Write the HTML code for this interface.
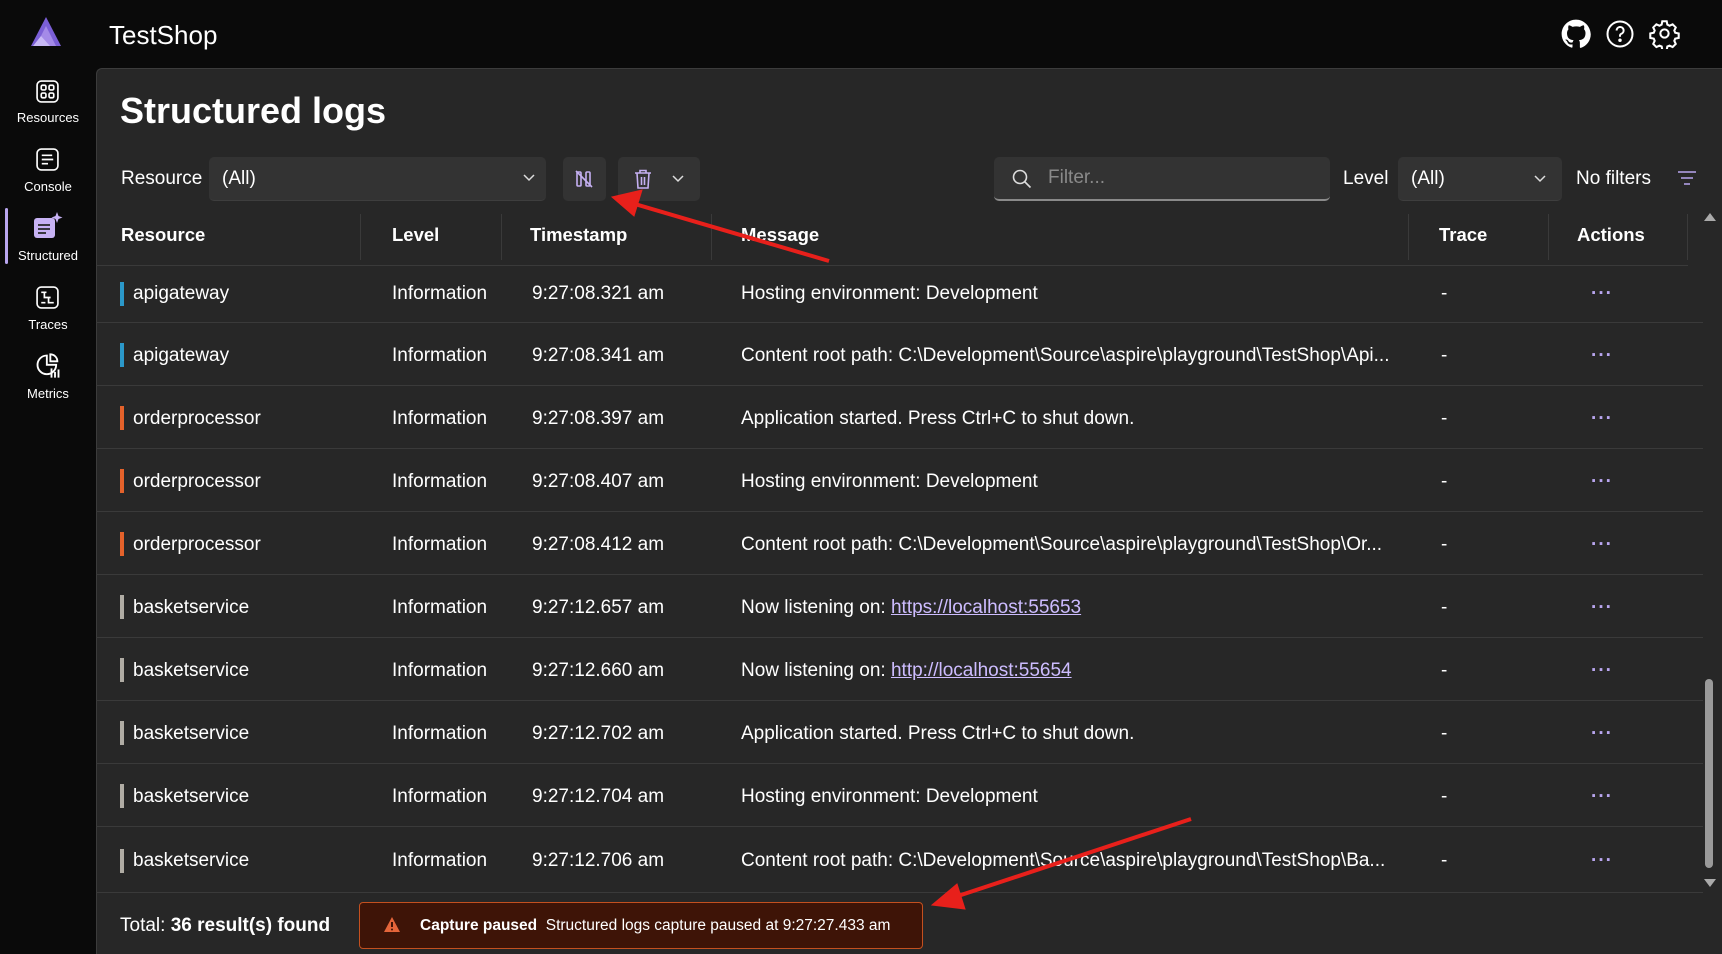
<!DOCTYPE html>
<html><head><meta charset="utf-8"><style>
*{box-sizing:border-box;margin:0;padding:0}
body{width:1722px;height:954px;background:#0a0a0a;font-family:"Liberation Sans",sans-serif;color:#fff;position:relative;overflow:hidden}
.abs{position:absolute}
.panel{position:absolute;left:96px;top:68px;width:1626px;height:886px;background:#272727;border-top:1px solid #3c3c3c;border-left:1px solid #3c3c3c;border-top-left-radius:6px}
.nav{position:absolute;left:0;width:96px;text-align:center;font-size:13px;color:#fff}
.sel{position:absolute;background:#333;border-radius:5px;border-bottom:1px solid #3e3e3e;font-size:19px;display:flex;align-items:center;padding-left:13px}
.th{position:absolute;top:214px;height:52px;line-height:42px;font-size:18.5px;font-weight:bold}
.sep{position:absolute;top:214px;width:1px;height:46px;background:#3a3a3a}
.row{position:absolute;left:96px;width:1607px;height:63px;border-bottom:1px solid #3a3a3a;font-size:19px}
.row div{position:absolute;top:0;line-height:65px;white-space:nowrap}
.bar{position:absolute;left:24px;top:20px;width:4px;height:24px}
.dots{color:#b9a6ef;font-weight:bold;letter-spacing:1px}
a{color:#cdbcff;text-decoration:underline}
</style></head><body>
<svg class="abs" style="left:28px;top:16px" width="36" height="32" viewBox="0 0 36 32"><polygon points="18,1 3,30 33,30" fill="#7b5fd6"/><polygon points="18,10 8,30 28,30" fill="#a48ae8"/><polygon points="13,20 5,30 22,30" fill="#c8b8f5"/></svg>
<div class="abs" style="left:109px;top:20px;font-size:26px">TestShop</div>
<svg class="abs" style="left:1561px;top:19px" width="30" height="30" viewBox="0 0 24 24"><path fill="#fff" d="M12 .5C5.7.5.5 5.7.5 12c0 5.1 3.3 9.4 7.9 10.9.6.1.8-.3.8-.6v-2c-3.2.7-3.9-1.5-3.9-1.5-.5-1.3-1.3-1.7-1.3-1.7-1-.7.1-.7.1-.7 1.2.1 1.8 1.2 1.8 1.2 1 1.8 2.8 1.3 3.5 1 .1-.8.4-1.3.7-1.6-2.6-.3-5.3-1.3-5.3-5.7 0-1.3.5-2.3 1.2-3.1-.1-.3-.5-1.5.1-3.1 0 0 1-.3 3.2 1.2a11 11 0 0 1 5.8 0c2.2-1.5 3.2-1.2 3.2-1.2.6 1.6.2 2.8.1 3.1.8.8 1.2 1.8 1.2 3.1 0 4.4-2.7 5.4-5.3 5.7.4.4.8 1.1.8 2.2v3.3c0 .3.2.7.8.6 4.6-1.5 7.9-5.8 7.9-10.9C23.5 5.7 18.3.5 12 .5z"/></svg>
<svg class="abs" style="left:1605px;top:19px" width="30" height="30" viewBox="0 0 24 24" fill="none" stroke="#fff" stroke-width="1.6"><circle cx="12" cy="12" r="10"/><path d="M9.3 9.2a2.8 2.8 0 1 1 3.8 2.6c-.7.3-1.1.9-1.1 1.6v.8"/><circle cx="12" cy="17" r=".6" fill="#fff"/></svg>
<svg class="abs" style="left:1649px;top:18px" width="31" height="31" viewBox="0 0 24 24" fill="none" stroke="#fff" stroke-width="1.6"><circle cx="12" cy="12" r="3.2"/><path d="M10.3 2.5h3.4l.5 2.6 1.7.9 2.4-1.1 2.4 2.4-1.1 2.4.7 1.7 2.7.6v3.4l-2.7.6-.7 1.7 1.1 2.4-2.4 2.4-2.4-1.1-1.7.7-.5 2.7h-3.4l-.5-2.7-1.7-.7-2.4 1.1-2.4-2.4 1.1-2.4-.7-1.7-2.7-.6v-3.4l2.7-.6.7-1.7-1.1-2.4 2.4-2.4 2.4 1.1 1.7-.9z"/></svg>
<svg class="abs" style="left:35px;top:79px" width="25" height="25" viewBox="0 0 24 24" fill="none" stroke="#fff" stroke-width="1.6"><rect x="2" y="2" width="20" height="20" rx="4"/><rect x="6" y="6" width="4.5" height="4.5" rx="1.3"/><rect x="13.5" y="6" width="4.5" height="4.5" rx="1.3"/><rect x="6" y="13.5" width="4.5" height="4.5" rx="1.3"/><rect x="13.5" y="13.5" width="4.5" height="4.5" rx="1.3"/></svg>
<div class="nav" style="top:110px">Resources</div>
<svg class="abs" style="left:35px;top:147px" width="25" height="25" viewBox="0 0 24 24" fill="none" stroke="#fff" stroke-width="1.6"><rect x="2" y="2" width="20" height="20" rx="4"/><path d="M6.5 8h10M6.5 12h11M6.5 16h6"/></svg>
<div class="nav" style="top:179px">Console</div>
<div class="abs" style="left:5px;top:208px;width:3px;height:56px;background:#b9a6ef;border-radius:2px"></div>
<svg class="abs" style="left:33px;top:212px" width="30" height="28" viewBox="0 0 30 28"><rect x="1" y="6" width="21" height="20" rx="3" fill="#c7b2f4"/><path d="M5 13h12M5 17h12M5 21h8" stroke="#272727" stroke-width="1.8"/><path d="M24 0l1.5 4 4 1.5-4 1.5L24 11l-1.5-4-4-1.5 4-1.5z" fill="#c7b2f4"/></svg>
<div class="nav" style="top:248px">Structured</div>
<svg class="abs" style="left:35px;top:285px" width="25" height="25" viewBox="0 0 24 24" fill="none" stroke="#fff" stroke-width="1.6"><rect x="2" y="2" width="20" height="20" rx="4"/><path d="M6 7h5M9 7v5h6M13 12v5h5M6 17h4"/></svg>
<div class="nav" style="top:317px">Traces</div>
<svg class="abs" style="left:34px;top:352px" width="28" height="28" viewBox="0 0 24 24" fill="none" stroke="#fff" stroke-width="1.6"><path d="M11 3a8 8 0 1 0 8 8h-8z"/><path d="M14 2v6h6a6 6 0 0 0-6-6z"/><path d="M15 14v8M18 17v5M21 15v7"/></svg>
<div class="nav" style="top:386px">Metrics</div>

<div class="panel"></div>
<div class="abs" style="left:120px;top:90px;font-size:36px;font-weight:bold">Structured logs</div>
<div class="abs" style="left:121px;top:168px;font-size:19px">Resource</div>
<div class="sel" style="left:209px;top:157px;width:337px;height:44px">(All)</div>
<svg class="abs" style="left:522px;top:173px" width="14" height="10" viewBox="0 0 14 10"><path d="M2 2l5 5 5-5" stroke="#ddd" stroke-width="1.5" fill="none"/></svg>
<div class="abs" style="left:563px;top:157px;width:43px;height:44px;background:#333;border-radius:5px"></div>
<svg class="abs" style="left:574px;top:169px" width="20" height="20" viewBox="0 0 20 20" fill="none" stroke="#c5b0f2" stroke-width="1.6"><rect x="3" y="3" width="4" height="14" rx="1"/><rect x="12" y="3" width="4" height="14" rx="1"/><path d="M2 2l16 16"/></svg>
<div class="abs" style="left:618px;top:157px;width:82px;height:44px;background:#333;border-radius:5px"></div>
<svg class="abs" style="left:633px;top:168px" width="20" height="22" viewBox="0 0 20 22" fill="none" stroke="#c5b0f2" stroke-width="1.6"><path d="M2 5h16M7 5V2.5h6V5M4 5l1 15h10l1-15M8.5 9v8M11.5 9v8"/></svg>
<svg class="abs" style="left:671px;top:174px" width="14" height="10" viewBox="0 0 14 10"><path d="M2 2l5 5 5-5" stroke="#ddd" stroke-width="1.5" fill="none"/></svg>
<div class="sel" style="left:994px;top:157px;width:336px;height:44px;border-bottom:2px solid #8a8a8a;padding-left:54px;color:#8a8a8a">Filter...</div>
<svg class="abs" style="left:1011px;top:168px" width="22" height="22" viewBox="0 0 22 22" fill="none" stroke="#ddd" stroke-width="1.6"><circle cx="9" cy="9" r="6.5"/><path d="M13.5 13.5l6 6"/></svg>
<div class="abs" style="left:1343px;top:168px;font-size:19px">Level</div>
<div class="sel" style="left:1398px;top:157px;width:164px;height:44px">(All)</div>
<svg class="abs" style="left:1533px;top:174px" width="14" height="10" viewBox="0 0 14 10"><path d="M2 2l5 5 5-5" stroke="#ddd" stroke-width="1.5" fill="none"/></svg>
<div class="abs" style="left:1576px;top:168px;font-size:19px">No filters</div>
<svg class="abs" style="left:1677px;top:170px" width="20" height="16" viewBox="0 0 20 16" stroke="#b9a6ef" stroke-width="1.6"><path d="M1 2h18M4 8h12M7 14h6"/></svg>
<div class="abs" style="left:96px;top:265px;width:1592px;height:1px;background:#3a3a3a"></div>
<div class="th" style="left:121px">Resource</div>
<div class="th" style="left:392px">Level</div>
<div class="th" style="left:530px">Timestamp</div>
<div class="th" style="left:741px">Message</div>
<div class="th" style="left:1439px">Trace</div>
<div class="th" style="left:1577px">Actions</div>
<div class="sep" style="left:360px"></div><div class="sep" style="left:501px"></div><div class="sep" style="left:711px"></div><div class="sep" style="left:1408px"></div><div class="sep" style="left:1548px"></div><div class="sep" style="left:1687px"></div>
<div class="row" style="top:266px;height:57px"><span class="bar" style="top:16px;background:#2b98c9"></span><div style="left:37px;line-height:55px">apigateway</div><div style="left:296px;line-height:55px">Information</div><div style="left:436px;line-height:55px">9:27:08.321 am</div><div style="left:645px;line-height:55px">Hosting environment: Development</div><div style="left:1345px;line-height:55px">-</div><div class="dots" style="left:1495px;line-height:55px">···</div></div>
<div class="row" style="top:323px"><span class="bar" style="background:#2b98c9"></span><div style="left:37px">apigateway</div><div style="left:296px">Information</div><div style="left:436px">9:27:08.341 am</div><div style="left:645px">Content root path: C:\Development\Source\aspire\playground\TestShop\Api...</div><div style="left:1345px">-</div><div class="dots" style="left:1495px">···</div></div>
<div class="row" style="top:386px"><span class="bar" style="background:#e4622b"></span><div style="left:37px">orderprocessor</div><div style="left:296px">Information</div><div style="left:436px">9:27:08.397 am</div><div style="left:645px">Application started. Press Ctrl+C to shut down.</div><div style="left:1345px">-</div><div class="dots" style="left:1495px">···</div></div>
<div class="row" style="top:449px"><span class="bar" style="background:#e4622b"></span><div style="left:37px">orderprocessor</div><div style="left:296px">Information</div><div style="left:436px">9:27:08.407 am</div><div style="left:645px">Hosting environment: Development</div><div style="left:1345px">-</div><div class="dots" style="left:1495px">···</div></div>
<div class="row" style="top:512px"><span class="bar" style="background:#e4622b"></span><div style="left:37px">orderprocessor</div><div style="left:296px">Information</div><div style="left:436px">9:27:08.412 am</div><div style="left:645px">Content root path: C:\Development\Source\aspire\playground\TestShop\Or...</div><div style="left:1345px">-</div><div class="dots" style="left:1495px">···</div></div>
<div class="row" style="top:575px"><span class="bar" style="background:#b0aca4"></span><div style="left:37px">basketservice</div><div style="left:296px">Information</div><div style="left:436px">9:27:12.657 am</div><div style="left:645px">Now listening on: <a>https://localhost:55653</a></div><div style="left:1345px">-</div><div class="dots" style="left:1495px">···</div></div>
<div class="row" style="top:638px"><span class="bar" style="background:#b0aca4"></span><div style="left:37px">basketservice</div><div style="left:296px">Information</div><div style="left:436px">9:27:12.660 am</div><div style="left:645px">Now listening on: <a>http://localhost:55654</a></div><div style="left:1345px">-</div><div class="dots" style="left:1495px">···</div></div>
<div class="row" style="top:701px"><span class="bar" style="background:#b0aca4"></span><div style="left:37px">basketservice</div><div style="left:296px">Information</div><div style="left:436px">9:27:12.702 am</div><div style="left:645px">Application started. Press Ctrl+C to shut down.</div><div style="left:1345px">-</div><div class="dots" style="left:1495px">···</div></div>
<div class="row" style="top:764px"><span class="bar" style="background:#b0aca4"></span><div style="left:37px">basketservice</div><div style="left:296px">Information</div><div style="left:436px">9:27:12.704 am</div><div style="left:645px">Hosting environment: Development</div><div style="left:1345px">-</div><div class="dots" style="left:1495px">···</div></div>
<div class="row" style="top:827px;height:66px"><span class="bar" style="top:22px;background:#b0aca4"></span><div style="left:37px;line-height:68px">basketservice</div><div style="left:296px;line-height:68px">Information</div><div style="left:436px;line-height:68px">9:27:12.706 am</div><div style="left:645px;line-height:68px">Content root path: C:\Development\Source\aspire\playground\TestShop\Ba...</div><div style="left:1345px;line-height:68px">-</div><div class="dots" style="left:1495px;line-height:68px">···</div></div>
<svg class="abs" style="left:1703px;top:212px" width="14" height="10"><polygon points="7,1 13,9 1,9" fill="#aaa"/></svg>
<div class="abs" style="left:1705px;top:679px;width:8px;height:189px;background:#9a9a9a;border-radius:4px"></div>
<svg class="abs" style="left:1703px;top:878px" width="14" height="10"><polygon points="1,1 13,1 7,9" fill="#aaa"/></svg>
<div class="abs" style="left:120px;top:915px;font-size:19px">Total: <b>36 result(s) found</b></div>
<div class="abs" style="left:359px;top:902px;width:564px;height:47px;background:#3e1407;border:1px solid #c4501f;border-radius:4px;font-size:15.5px;line-height:45px;padding-left:60px;white-space:nowrap"><b>Capture paused</b>&nbsp; Structured logs capture paused at 9:27:27.433 am</div>
<svg class="abs" style="left:383px;top:916px" width="18" height="17" viewBox="0 0 18 17"><polygon points="9,1 17,16 1,16" fill="#e4653a"/><path d="M9 6v5" stroke="#3e1407" stroke-width="2"/><circle cx="9" cy="13.5" r="1" fill="#3e1407"/></svg>
<svg class="abs" style="left:0;top:0" width="1722" height="954"><g stroke="#e8201b" stroke-width="4" fill="#e8201b"><line x1="829" y1="261" x2="635" y2="204"/><polygon points="612,197 642,190 634,216" stroke-width="1"/><line x1="1191" y1="819" x2="955" y2="897"/><polygon points="932,905 957,884 965,909" stroke-width="1"/></g></svg>
</body></html>
